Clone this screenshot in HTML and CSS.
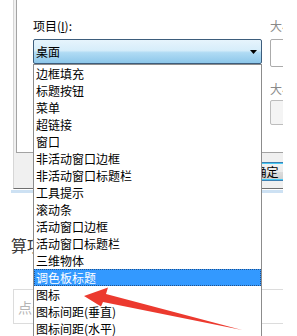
FILE: index.html
```html
<!DOCTYPE html>
<html lang="zh-CN">
<head>
  <meta charset="UTF-8">
  <meta name="viewport" content="width=device-width, initial-scale=1">
  <title>颜色和外观</title>
  <link rel="stylesheet" href="styles.css">
</head>
<body>
  <div class="shot">
    <!-- 对话框后面的页面 -->
    <div class="page">
      <h2 class="page-title">算项</h2>
      <div class="page-input">点击输入</div>
    </div>

    <!-- 对话框 -->
    <div class="dialog">
      <div class="tab-page">
        <div class="col">
          <label class="field-label">项目(<u>I</u>):</label>
          <div class="combo">桌面<span class="combo-arrow"></span></div>
        </div>
        <div class="col col-right">
          <label class="field-label muted">大小(Z):</label>
          <div class="spin"></div>
          <label class="field-label muted second">大小(E):</label>
          <div class="spin disabled"></div>
        </div>
      </div>
      <div class="buttons">
        <button type="button" class="btn">确定</button>
      </div>
    </div>

    <!-- 下拉列表 -->
    <ul class="droplist">
      <li>边框填充</li>
      <li>标题按钮</li>
      <li>菜单</li>
      <li>超链接</li>
      <li>窗口</li>
      <li>非活动窗口边框</li>
      <li>非活动窗口标题栏</li>
      <li>工具提示</li>
      <li>滚动条</li>
      <li>活动窗口边框</li>
      <li>活动窗口标题栏</li>
      <li>三维物体</li>
      <li class="selected">调色板标题</li>
      <li>图标</li>
      <li>图标间距(垂直)</li>
      <li>图标间距(水平)</li>
    </ul>

    <!-- 红色箭头标注 -->
    <svg class="arrow" width="283" height="336" viewBox="0 0 283 336">
      <polygon points="84,296 108,287.5 106,294 242,330 103,302 101,306.5" fill="#ec3a2f"/>
    </svg>
  </div>
</body>
</html>
```

FILE: styles.css
```css
* {
  box-sizing: border-box;
  margin: 0;
  padding: 0;
}
body {
  font-family: "Noto Sans CJK SC", "Microsoft YaHei", sans-serif;
  font-size: 12px;
  color: #000;
  background: #fff;
}
.shot {
  position: relative;
  width: 283px;
  height: 336px;
  overflow: hidden;
  background: #fff;
}

/* 后面的页面 */
.page {
  padding: 235px 0 0 13px;
}
.page-title {
  font-size: 16px;
  font-weight: normal;
  line-height: 20px;
  color: #3a3a3a;
  margin: 0 0 34px -2px;
}
.page-input {
  width: 300px;
  height: 35px;
  border: 1px solid #dcdcdc;
  padding: 9px 0 0 4px;
  font-size: 14px;
  line-height: 16px;
  color: #b5b5b5;
}

/* 对话框 */
.dialog {
  position: absolute;
  left: 13px;
  top: 0;
  width: 300px;
  height: 189px;
  background: #f0f0f0;
  border-left: 1px solid #d6d6d6;
  border-bottom: 1px solid #6f6f6f;
  padding-left: 2px;
}
.dialog::after {
  content: "";
  position: absolute;
  left: -3px;
  right: 0;
  top: 190px;
  height: 3px;
  background: #cde1f3;
}
.tab-page {
  display: flex;
  gap: 8px;
  height: 153px;
  background: #fff;
  border-left: 1px solid #a3a3a3;
  border-bottom: 1px solid #a3a3a3;
  padding: 17px 0 0 16px;
}
.col {
  display: flex;
  flex-direction: column;
}
.field-label {
  display: block;
  line-height: 17px;
  height: 17px;
  margin-bottom: 5px;
}
.field-label u {
  text-decoration: underline;
}
.muted {
  color: #8a8a8a;
}
.field-label.second {
  margin-top: 13px;
  margin-bottom: 3px;
}
.combo {
  position: relative;
  width: 229px;
  height: 25px;
  line-height: 23px;
  padding-left: 2px;
  border: 1px solid #3d5d7c;
  border-radius: 2px;
  background: linear-gradient(#e6f4fc 0%, #d6edfa 45%, #b0dbf4 55%, #8dc7ea 100%);
}
.combo-arrow {
  position: absolute;
  right: 4px;
  top: 10px;
  width: 7px;
  height: 4px;
  background: #000;
  clip-path: polygon(0 0, 100% 0, 50% 100%);
}
.spin {
  width: 40px;
  height: 28px;
  border: 1px solid #ababab;
  border-radius: 2px;
  background: #fff;
}
.spin.disabled {
  height: 25px;
  background: #f4f4f4;
  border-color: #bdbdbd;
}

.buttons {
  display: flex;
  padding: 9px 0 0 213px;
}
.btn {
  width: 75px;
  height: 19px;
  font-family: inherit;
  font-size: 12px;
  line-height: 15px;
  color: #000;
  border: 1px solid #3c7fb1;
  border-radius: 3px;
  box-shadow: inset 0 1px 0 #48c9f4, inset 0 -1px 0 #48c9f4;
  background: linear-gradient(#f2f2f2 0%, #ebebeb 50%, #dddddd 51%, #cfcfcf 100%);
}

/* 下拉列表 */
.droplist {
  position: absolute;
  left: 33px;
  top: 64px;
  width: 229px;
  height: 290px;
  list-style: none;
  background: #fff;
  border: 1px solid #8c8c8c;
}
.droplist li {
  height: 17px;
  line-height: 17px;
  padding-left: 2px;
  white-space: nowrap;
}
.droplist li.selected {
  background: #3399ff;
  color: #fff;
  outline: 1px dotted #23518a;
  outline-offset: -1px;
}

.arrow {
  position: absolute;
  left: 0;
  top: 0;
}
```
